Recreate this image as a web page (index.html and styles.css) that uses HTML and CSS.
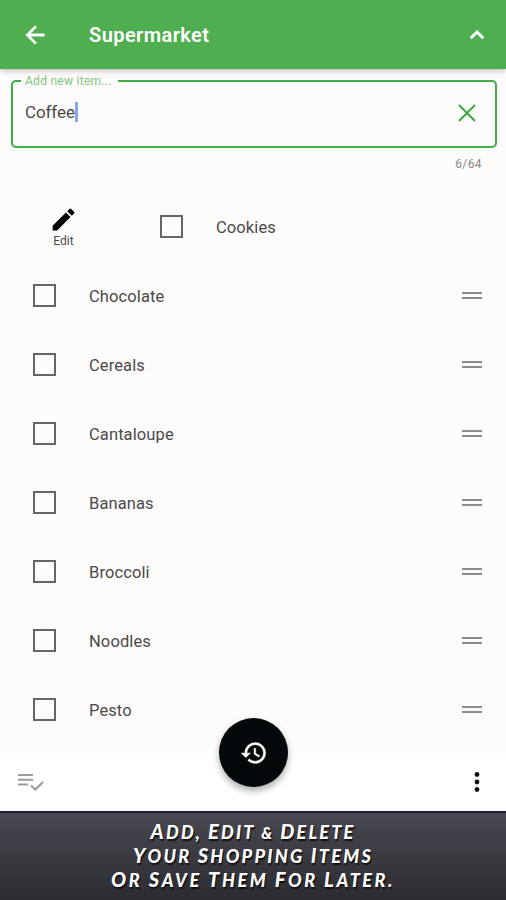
FILE: index.html
```html
<!DOCTYPE html>
<html lang="en">
<head>
<meta charset="utf-8">
<title>Supermarket</title>
<link rel="stylesheet" href="styles.css">
</head>
<body>
<header class="appbar">
  <svg class="back" viewBox="0 0 24 24"><path d="M20 11H7.83l5.59-5.59L12 4l-8 8 8 8 1.41-1.41L7.83 13H20z"/></svg>
  <h1>Supermarket</h1>
  <svg class="collapse" viewBox="0 0 24 24"><path d="M12 8l-6 6 1.41 1.41L12 10.83l4.59 4.58L18 14z"/></svg>
</header>
<main>
  <fieldset class="field">
    <legend>Add new item...</legend>
    <div class="entry"><span class="value">Coffee</span><span class="caret"></span>
      <svg class="clear" viewBox="0 0 18 18"><path d="M1 1l16 16M17 1L1 17"/></svg>
    </div>
  </fieldset>
  <div class="counter">6/64</div>
  <ul class="items">
    <li class="swiped">
      <div class="edit"><svg viewBox="0 0 24 24"><path d="M3 17.25V21h3.75L17.81 9.94l-3.75-3.75zM20.71 7.04a1 1 0 0 0 0-1.41l-2.34-2.34a1 1 0 0 0-1.41 0l-1.83 1.83 3.75 3.75z"/></svg><span>Edit</span></div>
      <i class="box"></i><span class="name">Cookies</span>
    </li>
    <li><i class="box"></i><span class="name">Chocolate</span><i class="drag"></i></li>
    <li><i class="box"></i><span class="name">Cereals</span><i class="drag"></i></li>
    <li><i class="box"></i><span class="name">Cantaloupe</span><i class="drag"></i></li>
    <li><i class="box"></i><span class="name">Bananas</span><i class="drag"></i></li>
    <li><i class="box"></i><span class="name">Broccoli</span><i class="drag"></i></li>
    <li><i class="box"></i><span class="name">Noodles</span><i class="drag"></i></li>
    <li><i class="box"></i><span class="name">Pesto</span><i class="drag"></i></li>
  </ul>
</main>
<nav class="bottombar">
  <svg class="checklist" viewBox="0 0 26 18"><path d="M0 2h15M0 6.7h15M0 11.6h10M13 12.5l4.3 4L25 9"/></svg>
  <div class="fab"><svg viewBox="0 0 24 24"><path d="M13 3a9 9 0 0 0-9 9H1l3.89 3.89.07.14L9 12H6a7 7 0 1 1 2.06 4.94l-1.42 1.42A9 9 0 1 0 13 3zm-1 5v5l4.28 2.54.72-1.21-3.5-2.08V8z"/></svg></div>
  <svg class="more" viewBox="0 0 6 20"><circle cx="3" cy="2.5" r="2.4"/><circle cx="3" cy="10" r="2.4"/><circle cx="3" cy="17.5" r="2.4"/></svg>
</nav>
<footer class="caption">
  <p class="line1"><b>A</b>dd, <b>E</b>dit <span class="amp">&amp;</span> <b>D</b>elete</p>
  <p class="line2"><b>Y</b>our <b>S</b>hopping <b>I</b>tems</p>
  <p class="line3"><b>O</b>r <b>S</b>ave <b>T</b>hem <b>F</b>or <b>L</b>ater.</p>
</footer>
</body>
</html>
```
FILE: styles.css
```css
* { box-sizing: border-box; }
body { margin: 0; width: 506px; height: 900px; overflow: hidden; display: flex; flex-direction: column; background: #fdfcfa; color: #4a4a4a; font-family: Roboto, sans-serif; }
svg { display: block; flex: none; }
.appbar { height: 69px; flex: none; display: flex; align-items: center; padding: 0 15px 0 21px; background: #4faf50; box-shadow: 0 1px 6px rgba(0,0,0,.32); color: #fff; fill: #fff; }
.back { width: 28px; height: 28px; stroke: #fff; stroke-width: .4; }
.appbar h1 { margin: 0 0 0 40px; flex: 1; font-size: 20px; line-height: 24px; font-weight: 600; letter-spacing: .42px; }
.collapse { width: 28px; height: 28px; stroke: #fff; stroke-width: .6; }
main { height: 684px; flex: none; }
.field { margin: 5px 9px 0 11px; height: 74px; border: 2px solid #3fae47; border-radius: 5px; padding: 0; min-width: 0; }
.field legend { margin-left: 8px; padding: 0 6px 0 4px; width: 97px; height: 13px; font-size: 12px; line-height: 15px; letter-spacing: .28px; color: #7dc481; white-space: nowrap; }
.entry { height: 46px; display: flex; align-items: center; padding: 3px 18px 0 12px; font-size: 17px; letter-spacing: -.1px; }
.caret { width: 3px; height: 20px; background: #87a5e8; }
.clear { width: 18px; height: 18px; margin: 3px 1px 0 auto; fill: none; stroke: #36a840; stroke-width: 1.9; }
.counter { margin-top: 9px; height: 14px; padding-right: 24px; text-align: right; font-size: 12px; line-height: 14px; letter-spacing: .4px; color: #898989; }
.items { list-style: none; margin: 21px 0 0; padding: 0; }
.items li { height: 69px; display: flex; align-items: center; padding: 0 24px 0 33px; }
.box { flex: none; width: 23px; height: 23px; border: 2px solid #656565; }
.name { margin: 2px 0 0 33px; font-size: 16.5px; line-height: 20px; letter-spacing: .1px; }
.drag { width: 20px; height: 7px; margin: -1px 0 0 auto; border: solid #8b8b8b; border-width: 2px 0; }
.items .swiped { padding-left: 50px; }
.edit { width: 27px; margin-right: 83px; display: flex; flex-direction: column; align-items: center; font-size: 12px; line-height: 14px; letter-spacing: .1px; }
.edit svg { width: 29px; height: 29px; fill: #000; }
.bottombar { height: 58px; flex: none; position: relative; display: flex; align-items: center; justify-content: space-between; padding: 0 26px 0 18px; background: #fff; }
.checklist { width: 26px; height: 18px; fill: none; stroke: #9b9b9b; stroke-width: 2; }
.fab { position: absolute; left: 219px; top: -35px; width: 69px; height: 69px; border-radius: 50%; background: #03080b; display: grid; place-items: center; box-shadow: 0 4px 7px rgba(0,0,0,.32); }
.fab svg { width: 28px; height: 28px; fill: #fff; stroke: #fff; stroke-width: .3; }
.more { width: 6px; height: 20px; fill: #111; }
.caption { height: 89px; flex: none; padding-top: 7px; border-top: 2px solid #211d37; background: linear-gradient(#494850, #2b2b31); color: #fff; text-align: center; font: italic 900 18px/24px Lato, sans-serif; text-transform: uppercase; text-shadow: 1px 2px 1px #111; }
.caption p { height: 24px; margin: 0; white-space: nowrap; }
.caption b { font-size: 20px; font-weight: 900; line-height: 20px; }
.line1 { letter-spacing: 2.2px; }
.line2 { letter-spacing: 2.3px; }
.line3 { letter-spacing: 2.6px; }
.amp { font-size: 16px; line-height: 16px; }
```
